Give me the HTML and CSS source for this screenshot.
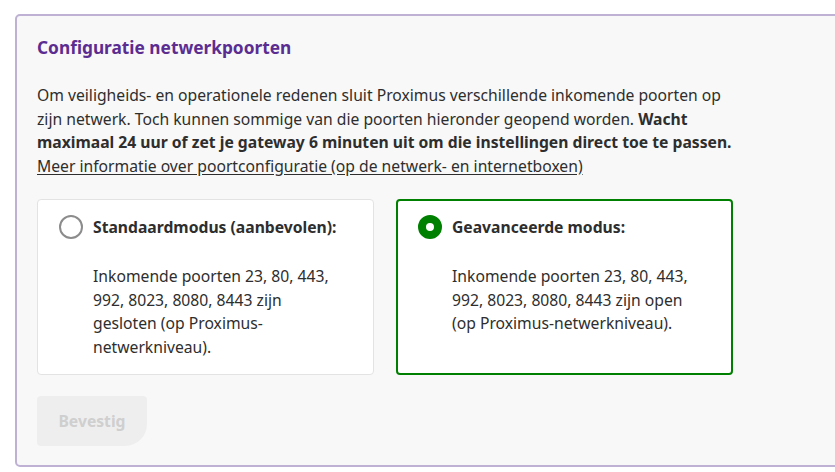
FILE: index.html
```html
<!DOCTYPE html>
<html lang="nl">
<head>
<meta charset="utf-8">
<title>Configuratie netwerkpoorten</title>
<link rel="stylesheet" href="styles.css">
</head>
<body>
<section class="panel">
  <h2 class="title">Configuratie netwerkpoorten</h2>
  <p class="intro">Om veiligheids- en operationele redenen sluit Proximus verschillende inkomende poorten op zijn netwerk. Toch kunnen sommige van die poorten hieronder geopend worden. <strong>Wacht maximaal 24 uur of zet je gateway 6 minuten uit om die instellingen direct toe te passen.</strong><br><a href="#" class="more">Meer informatie over poortconfiguratie (op de netwerk- en internetboxen)</a></p>
  <div class="options">
    <label class="option">
      <span class="radio"></span>
      <span class="option-body">
        <span class="option-title">Standaardmodus (aanbevolen):</span>
        <span class="option-desc">Inkomende poorten 23, 80, 443, 992, 8023, 8080, 8443 zijn gesloten (op Proximus-netwerkniveau).</span>
      </span>
    </label>
    <label class="option selected">
      <span class="radio"></span>
      <span class="option-body">
        <span class="option-title">Geavanceerde modus:</span>
        <span class="option-desc">Inkomende poorten 23, 80, 443, 992, 8023, 8080, 8443 zijn open (op Proximus-netwerkniveau).</span>
      </span>
    </label>
  </div>
  <button class="confirm" disabled>Bevestig</button>
</section>
</body>
</html>
```
FILE: styles.css
```css
html, body {
  margin: 0;
  padding: 0;
  background: #ffffff;
  overflow: hidden;
}
body {
  font-family: "Noto Sans", "DejaVu Sans", sans-serif;
  color: #2e2e2e;
  padding: 14px 0 0 15px;
}
.panel {
  width: 860px;
  box-sizing: border-box;
  border: 2px solid #bfb1d4;
  border-radius: 5px;
  background: #f8f8f8;
  padding: 20px 20px 19px 20px;
}
.title {
  margin: 0;
  font-size: 17.3px;
  line-height: 24px;
  font-weight: 700;
  color: #5c2d91;
}
.intro {
  margin: 24px 0 0 0;
  width: 696px;
  font-size: 15.7px;
  line-height: 23.5px;
}
.intro strong {
  font-weight: 700;
}
.more {
  color: #2e2e2e;
  text-decoration: underline;
  text-underline-offset: 2px;
}
.options {
  display: flex;
  gap: 22px;
  margin-top: 21px;
}
.option {
  width: 337px;
  height: 176px;
  box-sizing: border-box;
  background: #ffffff;
  border: 1px solid #e3e3e3;
  border-radius: 4px;
  padding: 15px 20px 0 21px;
  display: flex;
  gap: 10px;
  align-items: flex-start;
}
.option.selected {
  border: 2px solid #008000;
  padding: 14px 19px 0 20px;
}
.radio {
  flex: none;
  width: 24px;
  height: 24px;
  box-sizing: border-box;
  border-radius: 50%;
  border: 2px solid #8c8c8c;
}
.selected .radio {
  border: 8px solid #008000;
  background: #ffffff;
}
.option-body {
  display: flex;
  flex-direction: column;
  font-size: 15.7px;
}
.option-title {
  font-weight: 700;
  line-height: 24px;
}
.option-desc {
  margin-top: 26px;
  max-width: 240px;
  line-height: 23.7px;
}
.confirm {
  display: block;
  margin-top: 21px;
  width: 110px;
  height: 50px;
  border: none;
  background: #eeeeee;
  color: #cfcfcf;
  font-family: inherit;
  font-size: 15.7px;
  font-weight: 700;
  border-radius: 4px 4px 22px 4px;
  padding: 0;
}
```
